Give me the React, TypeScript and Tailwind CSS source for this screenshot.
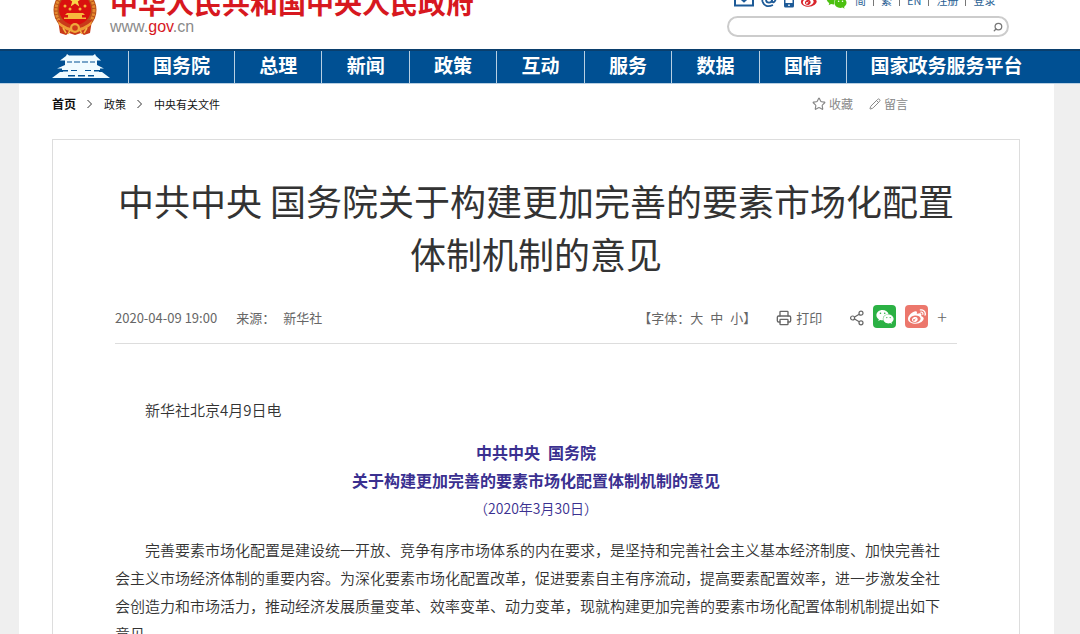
import { Pencil, Printer, Search, Star } from "lucide-react";
import { FaWeibo, FaWeixin } from "react-icons/fa6";

const navItems = ["国务院", "总理", "新闻", "政策", "互动", "服务", "数据", "国情", "国家政务服务平台"];
const topLinks = ["简", "繁", "EN", "注册", "登录"];

function Emblem() {
  return (
    <svg className="w-11 h-12 shrink-0" viewBox="0 0 44 48" aria-hidden="true">
      <ellipse cx="22" cy="23" rx="21.5" ry="21.5" fill="#b9501a" />
      <ellipse cx="22" cy="23" rx="19" ry="19.5" fill="none" stroke="#e58a2e" strokeWidth="3" strokeDasharray="2.5 1" />
      <path d="M5 33 H39 L37 46 L31 48 L28 46 L22 48 L16 46 L13 48 L7 46 Z" fill="#c93a1a" />
      <path d="M5 34 Q22 49 39 34 L38 38 Q22 52 6 38 Z" fill="#ee9c36" />
      <circle cx="22" cy="22" r="16" fill="#d9100f" />
      <path d="M22 7 l1.8 4.6 h5 l-4 3 1.5 4.8 -4.3-2.9 -4.3 2.9 1.5-4.8 -4-3 h5z" fill="#f8d648" />
      <g fill="#f6b83c">
        <circle cx="12" cy="19" r="1.5" />
        <circle cx="17" cy="22" r="1.5" />
        <circle cx="27" cy="22" r="1.5" />
        <circle cx="32" cy="19" r="1.5" />
        <path d="M14 26 h16 l2 2 h-3 v2.5 h4 v1.5 H11 v-1.5 h4 v-2.5 h-3z" />
      </g>
      <circle cx="22" cy="41" r="5" fill="#efaa3c" />
      <circle cx="22" cy="41" r="2.8" fill="#cf3a1c" />
      <path d="M10 41 l3 5 M34 41 l-3 5 M17 43 l-2 4 M27 43 l2 4" stroke="#f3b64a" strokeWidth="1.5" />
    </svg>
  );
}

function GateIcon() {
  return (
    <svg className="w-[58px] h-6" viewBox="0 0 58 24" fill="#f0fbff" aria-hidden="true">
      <path d="M15 0 l2 1.5 h24 l2-1.5 1 2 5 4.5 h-4 v1 H13 v-1 H8 l6-4.5z" />
      <path d="M13 7 h32 v4 l7 3.5 h-4 v1.5 H10 v-1.5 H5 l8-3.5z" />
      <path d="M11 16 h36 v2 h3 l8 6 H0 l8-6 h3z" />
      <g fill="#005093">
        <path d="M15 7.5 h5 v1 h-5z M22 7.5 h6 v1 h-6z M30 7.5 h6 v1 h-6z M38 7.5 h5 v1 h-5z" />
        <path d="M11 16 h5 v1.5 h-5z M19 16 h6 v1 h-6z M33 16 h6 v1 h-6z M42 16 h5 v1.5 h-5z" />
        <path d="M16 21 h7 v1.5 h-7z M26 21 h7 v1.5 h-7z M36 21 h6 v1.5 h-6z" />
      </g>
    </svg>
  );
}

function MailIcon() {
  return (
    <svg className="w-5 h-4" viewBox="0 0 20 16" fill="none" stroke="currentColor" strokeWidth="2" aria-hidden="true">
      <path d="M1 1 H19 V13.5 H1 Z M2 2 L10 9.5 L18 2" />
    </svg>
  );
}

function AtIcon() {
  return (
    <svg className="size-4" viewBox="0 0 16 16" fill="none" stroke="currentColor" strokeWidth="1.8" aria-hidden="true">
      <path d="M12 13 Q4 16.5 1.5 9.5 Q0 1 8 1 Q16 1 14.5 8 Q13 11.5 11 9.5 V4.5" />
      <ellipse cx="8" cy="7.5" rx="3" ry="3.2" />
    </svg>
  );
}

function PhoneIcon() {
  return (
    <svg className="w-2.5 h-4" viewBox="0 0 10 16" fill="currentColor" aria-hidden="true">
      <path d="M1.5 0 H8.5 Q10 0 10 1.5 V14 Q10 15.5 8.5 15.5 H1.5 Q0 15.5 0 14 V1.5 Q0 0 1.5 0 Z" />
      <path d="M1.5 2.5 H8.5 V11 H1.5 Z M4.2 12.5 H5.8 V14 H4.2 Z" fill="#fff" />
    </svg>
  );
}

function Chevron() {
  return (
    <svg className="w-3.5 h-3" viewBox="0 0 14 12" fill="none" stroke="#333" aria-hidden="true">
      <path d="M4.5 2 L8.5 6 L4.5 10" />
    </svg>
  );
}

function ShareIcon() {
  return (
    <svg className="w-3.5 h-4" viewBox="0 0 14 16" fill="none" stroke="currentColor" strokeWidth="1.2" aria-hidden="true">
      <circle cx="2.6" cy="8" r="2" />
      <circle cx="11" cy="3.2" r="2" />
      <circle cx="11" cy="12.8" r="2" />
      <path d="M4.6 7 L9.2 4.2 M4.6 9 L9.2 11.8" />
    </svg>
  );
}

function Header() {
  return (
    <header className="flex items-end justify-between h-[49px] overflow-hidden bg-white pl-[53px] pr-[71px]">
      <a href="#" className="flex items-end gap-[13px] pb-3.5">
        <Emblem />
        <span className="flex flex-col">
          <span className="text-[28px] leading-[34px] font-bold text-[#d7181f] whitespace-nowrap">
            中华人民共和国中央人民政府
          </span>
          <span className="font-['Liberation_Sans',sans-serif] text-base leading-4 text-[#8a8a8a]">
            www.<b className="font-normal text-[#d7181f]">gov</b>.cn
          </span>
        </span>
      </a>
      <div className="flex flex-col gap-2 w-[282px] pb-3">
        <div className="flex items-center h-4 pl-[7px] text-[11px] leading-4 text-[#2a5f94]">
          <div className="flex items-center gap-[7px] pr-2 text-[#1d5a97]">
            <a href="#" aria-label="邮箱"><MailIcon /></a>
            <a href="#" aria-label="问政"><AtIcon /></a>
            <a href="#" aria-label="手机"><PhoneIcon /></a>
            <a href="#" aria-label="微博"><FaWeibo className="size-[18px] text-[#d8232a]" /></a>
            <a href="#" aria-label="微信"><FaWeixin className="size-[21px] text-[#4cc010]" /></a>
          </div>
          {topLinks.map((item, i) => (
            <span key={item} className="flex whitespace-nowrap">
              {i > 0 && <i className="w-px h-3 mt-0.5 mx-[7px] bg-[#777]" />}
              <a href="#">{item}</a>
            </span>
          ))}
        </div>
        <form className="flex items-center h-[21px] rounded-full border-2 border-[#ccc] pl-3 pr-1">
          <input type="text" aria-label="搜索" className="flex-1 min-w-0 h-4 text-xs outline-none" />
          <button type="button" aria-label="搜索">
            <Search className="size-2.5 -scale-x-100 text-[#777]" strokeWidth={3} />
          </button>
        </form>
      </div>
    </header>
  );
}

function Nav() {
  return (
    <nav className="flex h-[35px] bg-[#005093] border-t-2 border-[#0b3f6d] border-b border-b-[#b8cfe2]">
      <a href="#" aria-label="中国政府网" className="flex items-center w-32 shrink-0 pl-[52px] pb-0.5">
        <GateIcon />
      </a>
      <ul className="flex-1 grid grid-cols-[106px_repeat(7,7fr)_16fr] pr-[34px]">
        {navItems.map((item) => (
          <li key={item} className="border-l border-[#b8cfe2]">
            <a href="#" className="flex justify-center text-[19px] leading-7 font-bold text-white whitespace-nowrap">
              {item}
            </a>
          </li>
        ))}
      </ul>
    </nav>
  );
}

function Breadcrumb() {
  return (
    <div className="flex items-center justify-between h-10 text-xs">
      <div className="flex items-center gap-[7px] text-[11px] text-[#111]">
        <a href="#" className="text-xs font-bold">首页</a>
        <Chevron />
        <a href="#">政策</a>
        <Chevron />
        <a href="#">中央有关文件</a>
      </div>
      <div className="flex items-center gap-4 mr-28 text-[#888]">
        <button type="button" className="flex items-center gap-[3px]">
          <Star className="size-3.5" /> 收藏
        </button>
        <button type="button" className="flex items-center gap-[3px]">
          <Pencil className="size-3" /> 留言
        </button>
      </div>
    </div>
  );
}

function Meta() {
  return (
    <div className="flex items-center justify-between h-[52px] border-b border-[#ddd] text-[13px] text-[#666]">
      <div className="flex items-center gap-[19px]">
        <time>2020-04-09 19:00</time>
        <span className="flex gap-2">
          <span>来源：</span>
          <span>新华社</span>
        </span>
      </div>
      <div className="flex items-center pr-2.5">
        <div className="flex">
          【字体：
          <span className="flex gap-[7px]">
            <button type="button">大</button>
            <button type="button">中</button>
            <button type="button">小</button>
          </span>
          】
        </div>
        <button type="button" className="flex items-center gap-1 ml-5 mr-7">
          <Printer className="size-4" /> 打印
        </button>
        <ShareIcon />
        <a href="#" aria-label="微信" className="flex items-center justify-center size-[23px] ml-[9px] mb-0.5 rounded-sm bg-[#2bb144] text-white">
          <FaWeixin className="size-[18px]" />
        </a>
        <a href="#" aria-label="微博" className="flex items-center justify-center size-[23px] ml-[9px] mb-0.5 rounded-sm bg-[#ec776c] text-white">
          <FaWeibo className="size-[18px]" />
        </a>
        <button type="button" className="ml-[9px] mb-1 text-lg font-light">+</button>
      </div>
    </div>
  );
}

function Article() {
  return (
    <article className="border border-[#ddd] px-[62px] pt-[34px]">
      <h1 className="text-4xl leading-[53px] text-center text-[#333] font-normal">
        中共中央 国务院关于构建更加完善的要素市场化配置
        <br />
        体制机制的意见
      </h1>
      <div className="pt-3">
        <Meta />
      </div>
      <div className="pt-[52px] text-[15px] leading-7 text-[#333] font-[350]">
        <p className="indent-[2em] mb-3.5">新华社北京4月9日电</p>
        <div className="mb-3.5 text-center text-[#3a3090]">
          <h2 className="text-base leading-7 font-bold">中共中央&ensp;国务院</h2>
          <h2 className="text-base leading-7 font-bold">关于构建更加完善的要素市场化配置体制机制的意见</h2>
          <p className="text-sm leading-7">（2020年3月30日）</p>
        </div>
        <p className="indent-[2em] mr-3">
          完善要素市场化配置是建设统一开放、竞争有序市场体系的内在要求，是坚持和完善社会主义基本经济制度、加快完善社会主义市场经济体制的重要内容。为深化要素市场化配置改革，促进要素自主有序流动，提高要素配置效率，进一步激发全社会创造力和市场活力，推动经济发展质量变革、效率变革、动力变革，现就构建更加完善的要素市场化配置体制机制提出如下意见。
        </p>
      </div>
    </article>
  );
}

export default function App() {
  return (
    <div lang="zh-CN" className="h-screen overflow-hidden bg-[#efefef] font-['Noto_Sans_CJK_SC',sans-serif]">
      <Header />
      <Nav />
      <main className="ml-[19px] mr-[26px] bg-white pl-[33px] pr-[34px]">
        <Breadcrumb />
        <div className="pt-[15px]">
          <Article />
        </div>
      </main>
    </div>
  );
}
